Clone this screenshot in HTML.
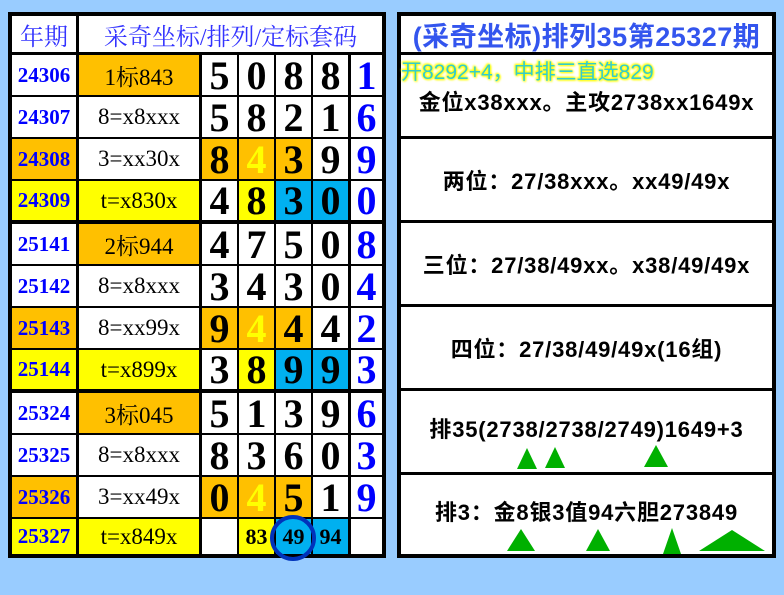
<!DOCTYPE html>
<html><head><meta charset="utf-8"><style>
body{margin:0;width:784px;height:595px;background:#99CCFF;position:relative;overflow:hidden;font-family:"Liberation Serif","Noto Serif CJK SC",serif}
#L{position:absolute;left:8px;top:12px;width:378px;height:546px;background:#000}
.c{position:absolute;background:#fff;display:flex;align-items:center;justify-content:center;white-space:nowrap;overflow:visible}
.h{color:#3333FF;font-size:24px;font-family:"Liberation Serif","Noto Serif CJK SC",serif}
.y{color:#0000FF;font-weight:bold;font-size:21px}
.l{font-size:23px}
.d{font-weight:bold;font-size:40px}
.b{color:#0000FF;font-weight:bold;font-size:40px}
.o{background:#FFC000}.ye{background:#FFFF00}.bl{background:#00B0F0}
.yt{color:#FFFF00}
.s{font-size:22px}
#R{position:absolute;left:397px;top:12px;width:379px;height:546px;background:#000;font-family:"Liberation Sans","Noto Sans CJK SC",sans-serif}
.r{position:absolute;left:4px;width:371px;background:#fff;display:flex;align-items:center;justify-content:center;white-space:nowrap;font-weight:bold;font-size:22px;letter-spacing:0.8px}
.tri{position:absolute;width:0;height:0;border-style:solid;border-color:transparent transparent #00B000 transparent}
</style></head><body>
<div id="L">
<div class="c h" style="left:4px;top:4px;width:64px;height:36px">年期</div>
<div class="c h" style="left:71px;top:4px;width:303px;height:36px">采奇坐标/排列/定标套码</div>
</div>
<div id="rows"></div>
<div id="R">
<div class="r" style="top:4px;height:36px;color:#3355EE;font-size:27px;letter-spacing:0.5px">(采奇坐标)排列35第25327期</div>
<div class="r" style="top:43px;height:81px"><span style="position:absolute;left:0px;top:1px;color:#33CCCC;font-size:21px;font-weight:normal;letter-spacing:0;text-shadow:0 0 2px #FFFF00,0 0 2px #FFFF00,1px 1px 2px #FFFF00,-1px -1px 2px #FFFF00">开8292+4，中排三直选829</span><span style="margin-top:10px">金位x38xxx。主攻2738xx1649x</span></div>
<div class="r" style="top:127px;height:81px">两位：27/38xxx。xx49/49x</div>
<div class="r" style="top:211px;height:81px">三位：27/38/49xx。x38/49/49x</div>
<div class="r" style="top:295px;height:81px">四位：27/38/49/49x(16组)</div>
<div class="r" style="top:379px;height:81px"><span style="margin-top:-8px">排35(2738/2738/2749)1649+3</span></div>
<div class="r" style="top:463px;height:79px"><span style="margin-top:-8px">排3：金8银3值94六胆273849</span></div>
</div>
<div class="tri" style="left:517px;top:448px;border-width:0 10px 21px 10px"></div>
<div class="tri" style="left:545px;top:447px;border-width:0 10px 21px 10px"></div>
<div class="tri" style="left:644px;top:445px;border-width:0 12px 22px 12px"></div>
<div class="tri" style="left:507px;top:529px;border-width:0 14px 22px 14px"></div>
<div class="tri" style="left:586px;top:529px;border-width:0 12px 22px 12px"></div>
<div class="tri" style="left:663px;top:528px;border-width:0 9px 26px 9px"></div>
<div class="tri" style="left:699px;top:530px;border-width:0 33px 21px 33px"></div>

<!-- rows: x: year 12-76, label 79-199, d1 202-237, d2 239-274, d3 276-311, d4 313-348, last 351-382 -->
<div style="position:absolute;left:0;top:0">
<!-- row tops: 55,97,139,181 | 225,267,309,351 | 395,437,479,521 ; heights 40 (row4/8/12: 39,39,34) -->
<div class="c y" style="left:12px;top:55px;width:64px;height:40px">24306</div><div class="c l o" style="left:79px;top:55px;width:120px;height:40px">1标843</div><div class="c d" style="left:202px;top:55px;width:35px;height:40px">5</div><div class="c d" style="left:239px;top:55px;width:35px;height:40px">0</div><div class="c d" style="left:276px;top:55px;width:35px;height:40px">8</div><div class="c d" style="left:313px;top:55px;width:35px;height:40px">8</div><div class="c b" style="left:351px;top:55px;width:31px;height:40px">1</div>
<div class="c y" style="left:12px;top:97px;width:64px;height:40px">24307</div><div class="c l" style="left:79px;top:97px;width:120px;height:40px">8=x8xxx</div><div class="c d" style="left:202px;top:97px;width:35px;height:40px">5</div><div class="c d" style="left:239px;top:97px;width:35px;height:40px">8</div><div class="c d" style="left:276px;top:97px;width:35px;height:40px">2</div><div class="c d" style="left:313px;top:97px;width:35px;height:40px">1</div><div class="c b" style="left:351px;top:97px;width:31px;height:40px">6</div>
<div class="c y o" style="left:12px;top:139px;width:64px;height:40px">24308</div><div class="c l" style="left:79px;top:139px;width:120px;height:40px">3=xx30x</div><div class="c d o" style="left:202px;top:139px;width:35px;height:40px">8</div><div class="c d o yt" style="left:239px;top:139px;width:35px;height:40px">4</div><div class="c d o" style="left:276px;top:139px;width:35px;height:40px">3</div><div class="c d" style="left:313px;top:139px;width:35px;height:40px">9</div><div class="c b" style="left:351px;top:139px;width:31px;height:40px">9</div>
<div class="c y ye" style="left:12px;top:181px;width:64px;height:39px">24309</div><div class="c l ye" style="left:79px;top:181px;width:120px;height:39px">t=x830x</div><div class="c d" style="left:202px;top:181px;width:35px;height:39px">4</div><div class="c d ye" style="left:239px;top:181px;width:35px;height:39px">8</div><div class="c d bl" style="left:276px;top:181px;width:35px;height:39px">3</div><div class="c d bl" style="left:313px;top:181px;width:35px;height:39px">0</div><div class="c b" style="left:351px;top:181px;width:31px;height:39px">0</div>

<div class="c y" style="left:12px;top:224px;width:64px;height:40px">25141</div><div class="c l o" style="left:79px;top:224px;width:120px;height:40px">2标944</div><div class="c d" style="left:202px;top:224px;width:35px;height:40px">4</div><div class="c d" style="left:239px;top:224px;width:35px;height:40px">7</div><div class="c d" style="left:276px;top:224px;width:35px;height:40px">5</div><div class="c d" style="left:313px;top:224px;width:35px;height:40px">0</div><div class="c b" style="left:351px;top:224px;width:31px;height:40px">8</div>
<div class="c y" style="left:12px;top:266px;width:64px;height:40px">25142</div><div class="c l" style="left:79px;top:266px;width:120px;height:40px">8=x8xxx</div><div class="c d" style="left:202px;top:266px;width:35px;height:40px">3</div><div class="c d" style="left:239px;top:266px;width:35px;height:40px">4</div><div class="c d" style="left:276px;top:266px;width:35px;height:40px">3</div><div class="c d" style="left:313px;top:266px;width:35px;height:40px">0</div><div class="c b" style="left:351px;top:266px;width:31px;height:40px">4</div>
<div class="c y o" style="left:12px;top:308px;width:64px;height:40px">25143</div><div class="c l" style="left:79px;top:308px;width:120px;height:40px">8=xx99x</div><div class="c d o" style="left:202px;top:308px;width:35px;height:40px">9</div><div class="c d o yt" style="left:239px;top:308px;width:35px;height:40px">4</div><div class="c d o" style="left:276px;top:308px;width:35px;height:40px">4</div><div class="c d" style="left:313px;top:308px;width:35px;height:40px">4</div><div class="c b" style="left:351px;top:308px;width:31px;height:40px">2</div>
<div class="c y ye" style="left:12px;top:350px;width:64px;height:39px">25144</div><div class="c l ye" style="left:79px;top:350px;width:120px;height:39px">t=x899x</div><div class="c d" style="left:202px;top:350px;width:35px;height:39px">3</div><div class="c d ye" style="left:239px;top:350px;width:35px;height:39px">8</div><div class="c d bl" style="left:276px;top:350px;width:35px;height:39px">9</div><div class="c d bl" style="left:313px;top:350px;width:35px;height:39px">9</div><div class="c b" style="left:351px;top:350px;width:31px;height:39px">3</div>

<div class="c y" style="left:12px;top:393px;width:64px;height:40px">25324</div><div class="c l o" style="left:79px;top:393px;width:120px;height:40px">3标045</div><div class="c d" style="left:202px;top:393px;width:35px;height:40px">5</div><div class="c d" style="left:239px;top:393px;width:35px;height:40px">1</div><div class="c d" style="left:276px;top:393px;width:35px;height:40px">3</div><div class="c d" style="left:313px;top:393px;width:35px;height:40px">9</div><div class="c b" style="left:351px;top:393px;width:31px;height:40px">6</div>
<div class="c y" style="left:12px;top:435px;width:64px;height:40px">25325</div><div class="c l" style="left:79px;top:435px;width:120px;height:40px">8=x8xxx</div><div class="c d" style="left:202px;top:435px;width:35px;height:40px">8</div><div class="c d" style="left:239px;top:435px;width:35px;height:40px">3</div><div class="c d" style="left:276px;top:435px;width:35px;height:40px">6</div><div class="c d" style="left:313px;top:435px;width:35px;height:40px">0</div><div class="c b" style="left:351px;top:435px;width:31px;height:40px">3</div>
<div class="c y o" style="left:12px;top:477px;width:64px;height:40px">25326</div><div class="c l" style="left:79px;top:477px;width:120px;height:40px">3=xx49x</div><div class="c d o" style="left:202px;top:477px;width:35px;height:40px">0</div><div class="c d o yt" style="left:239px;top:477px;width:35px;height:40px">4</div><div class="c d o" style="left:276px;top:477px;width:35px;height:40px">5</div><div class="c d" style="left:313px;top:477px;width:35px;height:40px">1</div><div class="c b" style="left:351px;top:477px;width:31px;height:40px">9</div>
<div class="c y ye" style="left:12px;top:519px;width:64px;height:35px">25327</div><div class="c l ye" style="left:79px;top:519px;width:120px;height:35px">t=x849x</div><div class="c" style="left:202px;top:519px;width:35px;height:35px"></div><div class="c d ye s" style="left:239px;top:519px;width:35px;height:35px">83</div><div class="c d bl s" style="left:276px;top:519px;width:35px;height:35px">49</div><div class="c d bl s" style="left:313px;top:519px;width:35px;height:35px">94</div><div class="c" style="left:351px;top:519px;width:31px;height:35px"></div>
<div style="position:absolute;left:270px;top:515px;width:38px;height:38px;border:4px solid #0033BB;border-radius:50%"></div>
</div>
</body></html>
